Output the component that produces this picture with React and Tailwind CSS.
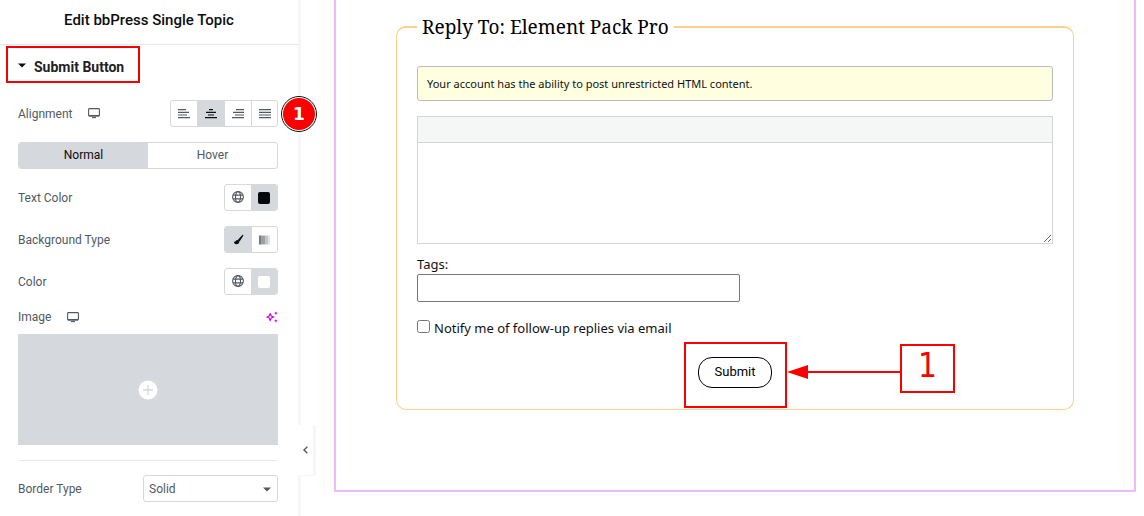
import React from 'react';

const group = 'inline-flex h-[27px] overflow-hidden rounded-[3px] border border-[#d5d8dc] bg-white';

function AlignIcon({ kind }) {
  const rows = {
    left: [[0, 8], [0, 11], [0, 9], [0, 12]],
    center: [[4, 8], [1, 11], [3, 9], [0, 12]],
    right: [[4, 12], [1, 12], [3, 12], [0, 12]],
    justify: [[0, 12], [0, 12], [0, 12], [0, 12]],
  }[kind];
  return (
    <svg width="12" height="10" viewBox="0 0 12 10" fill="none" stroke="currentColor" strokeWidth="1.2" aria-hidden="true">
      {rows.map(([a, b], i) => (
        <path key={i} d={`M${a} ${0.6 + i * 2.7}H${b}`} />
      ))}
    </svg>
  );
}

function Monitor() {
  return (
    <svg width="12" height="11" viewBox="0 0 12 11" fill="none" stroke="#515962" aria-hidden="true">
      <rect x="0.6" y="0.6" width="10.8" height="7.4" rx="0.8" strokeWidth="1.1" />
      <path d="M1 7.7H11" strokeWidth="1.5" />
      <path d="M4 9.6H8" strokeWidth="1.1" />
    </svg>
  );
}

function Globe() {
  return (
    <svg width="12" height="12" viewBox="0 0 12 12" fill="none" stroke="#515962" strokeWidth="1.1" aria-hidden="true">
      <circle cx="6" cy="6" r="5.4" />
      <ellipse cx="6" cy="6" rx="2.5" ry="5.4" />
      <path d="M1 4.1H11M1 7.9H11" />
    </svg>
  );
}

function Brush() {
  return (
    <svg width="11" height="11" viewBox="0 0 12 12" fill="#0c0d0e" aria-hidden="true">
      <path d="M10.2 1C10.9 .7 11.5 1.3 11.2 2L7.6 7.7C7.2 8.3 6.6 8.1 6 7.6C5.4 7.1 5.2 6.6 5.6 6.1Z" />
      <path d="M4.7 6.5C5.9 6.6 6.9 7.6 6.8 8.8C6.6 10.6 5.1 11.2 3.6 11.1C2 11 1.2 9.9 .8 8.2C1.5 8.6 2.1 8.8 2.5 8.2C3 7.3 3.6 6.5 4.7 6.5Z" />
    </svg>
  );
}

function Gradient() {
  return (
    <svg width="12" height="10" viewBox="0 0 12 10" aria-hidden="true">
      <path d="M0 .5H2V9.5H0Z" fill="#777c82" />
      <path d="M2 .5H6V9.5H2Z" fill="#9da2a7" />
      <path d="M6 .5H9V9.5H6Z" fill="#c3c6c9" />
      <path d="M9 .5H11V9.5H9Z" fill="#e0e1e3" />
    </svg>
  );
}

function Sparkles() {
  return (
    <svg width="12" height="12" viewBox="0 0 12 12" fill="none" stroke="#d004d4" aria-hidden="true">
      <path d="M4.2 2.6L5.2 5L7.8 6L5.2 7L4.2 9.6L3.2 7L.8 6L3.2 5Z" strokeWidth="1.2" strokeLinejoin="round" />
      <path d="M9.9 .5L10.5 1.6L11.7 2.2L10.5 2.8L9.9 3.9L9.3 2.8L8.1 2.2L9.3 1.6ZM9.9 8.1L10.5 9.2L11.7 9.8L10.5 10.4L9.9 11.5L9.3 10.4L8.1 9.8L9.3 9.2Z" fill="#d004d4" stroke="none" />
    </svg>
  );
}

function Row({ label, className = 'mt-[15px]', children }) {
  return (
    <div className={`flex h-[27px] items-center justify-between ${className}`}>
      <span>{label}</span>
      {children}
    </div>
  );
}

function ColorControl({ name, swatch }) {
  return (
    <div className={group}>
      <button type="button" aria-label={`${name} global`} className="flex w-[26px] items-center justify-center pb-px"><Globe /></button>
      <button type="button" aria-label={`${name} picker`} className="flex w-[26px] items-center justify-center bg-[#d5d8dc]">
        <span className={`size-3 rounded-[2px] ${swatch}`} />
      </button>
    </div>
  );
}

function Sidebar() {
  return (
    <aside className="relative w-[301px] shrink-0 border-r-[3px] border-[#f6f6f7] font-['Roboto',sans-serif] text-[12px] leading-4 text-[#515962]">
      <header className="flex h-[45px] items-center justify-center border-b border-[#e6e8ea] pb-1">
        <h1 className="text-[15px] leading-5 font-medium text-[#0c0d0e]">Edit bbPress Single Topic</h1>
      </header>

      <div className="ml-1.5 mt-px flex h-[37px] w-[134px] border-2 border-[#f50000]">
        <button type="button" className="flex flex-1 items-center pt-1 pl-2.5 text-[14px] font-bold whitespace-nowrap text-[#1f2124]">
          <svg width="8" height="5" viewBox="0 0 8 5" className="mr-2 mb-0.5" aria-hidden="true"><path d="M0 .5H8L4 4.5Z" fill="#0c0d0e" /></svg>
          Submit Button
        </button>
      </div>

      <div className="pr-5 pl-[18px]">
        <Row className="mt-[17px]" label={<span className="flex items-center gap-4">Alignment <Monitor /></span>}>
          <div className="relative">
            <div className={`${group} align-top`}>
              <button type="button" aria-label="Left" className="flex w-[26px] items-center justify-center"><AlignIcon kind="left" /></button>
              <button type="button" aria-label="Center" className="flex w-[28px] items-center justify-center bg-[#d5d8dc] text-[#0c0d0e]"><AlignIcon kind="center" /></button>
              <button type="button" aria-label="Right" className="flex w-[26px] items-center justify-center"><AlignIcon kind="right" /></button>
              <button type="button" aria-label="Justified" className="flex w-[26px] items-center justify-center border-l border-[#d5d8dc]"><AlignIcon kind="justify" /></button>
            </div>
            <span className="absolute top-1/2 left-full ml-[3px] flex size-9 -translate-y-1/2 items-center justify-center rounded-full border border-[#111] bg-white p-px">
              <span className="flex size-full items-center justify-center rounded-full bg-[#fb0000] font-['DejaVu_Sans',sans-serif] text-[17px] font-bold text-white">1</span>
            </span>
          </div>
        </Row>

        <div className={`${group} mt-[15px] w-full align-top`}>
          <button type="button" className="flex-1 bg-[#d5d8dc] pb-0.5 text-[#0c0d0e]">Normal</button>
          <button type="button" className="flex-1 pb-0.5">Hover</button>
        </div>

        <Row label="Text Color"><ColorControl name="Text Color" swatch="bg-[#05070b]" /></Row>
        <Row label="Background Type">
          <div className={group}>
            <button type="button" aria-label="Classic" className="flex w-[27px] items-center justify-center bg-[#d5d8dc]"><Brush /></button>
            <button type="button" aria-label="Gradient" className="flex w-[25px] items-center justify-center"><Gradient /></button>
          </div>
        </Row>
        <Row label="Color"><ColorControl name="Color" swatch="bg-white" /></Row>

        <div className="mt-[14px] flex items-center justify-between">
          <span className="flex items-center gap-4">Image <Monitor /></span>
          <button type="button" aria-label="Generate with AI"><Sparkles /></button>
        </div>
        <button type="button" aria-label="Choose image" className="mt-[9px] flex h-[111px] w-full items-center justify-center bg-[#d5d8dc]">
          <svg width="20" height="20" viewBox="0 0 20 20" aria-hidden="true">
            <circle cx="10" cy="10" r="9.5" fill="#fff" />
            <path d="M10 5V15M5 10H15" stroke="#d5d8dc" strokeWidth="1.3" />
          </svg>
        </button>

        <hr className="mt-[15px] border-[#e6e8ea]" />

        <div className="mt-[14px] flex h-[27px] items-center justify-between">
          <label htmlFor="border-type">Border Type</label>
          <span className="relative flex w-[135px]">
            <select id="border-type" className="h-[27px] w-full appearance-none rounded-[3px] border border-[#d5d8dc] bg-white pl-[5px]">
              <option>Solid</option>
            </select>
            <svg width="8" height="5" viewBox="0 0 8 5" className="pointer-events-none absolute top-[12px] right-[7px]" aria-hidden="true"><path d="M0 .5H8L4 4.5Z" fill="#515962" /></svg>
          </span>
        </div>
      </div>

      <button type="button" aria-label="Hide panel" className="absolute top-[425px] left-[298px] flex h-[51px] w-[18px] items-center justify-center rounded-r-[3px] border-r-[3px] border-b border-[#f6f6f7] bg-white">
        <svg width="5" height="8" viewBox="0 0 5 8" fill="none" stroke="#515962" strokeWidth="1.4" aria-hidden="true"><path d="M4.3 .7L1 4L4.3 7.3" /></svg>
      </button>
    </aside>
  );
}

function Preview() {
  return (
    <main className="mr-2 mb-6 ml-[33px] min-w-0 flex-1 border-2 border-t-0 border-[#f0b9fb] px-[60px] pt-[14px] pb-20 font-['Noto_Sans',sans-serif] text-[13px] leading-[18px] text-[#101114]">
      <fieldset className="min-w-0 rounded-[10px] border border-t-2 border-[#fbd08c] px-5 pb-[21px]">
        <legend className="px-[5px] font-['Noto_Serif','Liberation_Serif',serif] text-[19px] leading-[26px] text-black">Reply To: Element Pack Pro</legend>

        <div className="mt-[26px] flex h-[35px] items-center rounded-[3px] border border-[#b9bcbf] bg-[#ffffe0] px-[9px] text-[11px]">
          Your account has the ability to post unrestricted HTML content.
        </div>

        <div className="mt-[15px] border border-[#d3d5d9]">
          <div className="h-[26px] border-b border-[#d3d5d9] bg-[#f5f7f6]" />
          <textarea aria-label="Reply" className="block h-[100px] w-full resize-y outline-none" />
        </div>

        <div className="mt-[11px]">
          <label htmlFor="tags" className="block pb-px">Tags:</label>
          <input id="tags" type="text" className="block h-7 w-[323px] max-w-full rounded-[2px] border border-[#767676] px-2" />
        </div>

        <div className="mt-[17px] flex items-center gap-1">
          <input id="notify" type="checkbox" className="mb-[3px] size-[13px]" />
          <label htmlFor="notify">Notify me of follow-up replies via email</label>
        </div>

        <div className="mt-5 flex justify-center">
          <div className="relative">
            <button type="submit" className="h-[31px] w-[74px] rounded-[14px] border border-black pb-px font-['Roboto',sans-serif] text-[13px] text-black">Submit</button>
            <div className="pointer-events-none absolute -top-[15px] -left-[14px] flex items-start">
              <div className="h-[66px] w-[103px] shrink-0 border-2 border-[#fb0000]" />
              <svg width="113" height="14" viewBox="0 0 113 14" className="mt-[23px] shrink-0" aria-hidden="true">
                <path d="M0 7L21 0V14Z" fill="#fb0000" />
                <path d="M20 7H113" stroke="#fb0000" strokeWidth="2" />
              </svg>
              <div className="mt-0.5 flex h-[49px] w-[55px] shrink-0 items-center justify-center border-2 border-[#fb0000] pb-1.5 font-['DejaVu_Sans_Condensed','DejaVu_Sans',sans-serif] text-[33px] leading-none text-[#fb0000]">1</div>
            </div>
          </div>
        </div>
      </fieldset>
    </main>
  );
}

export default function App() {
  return (
    <div className="flex min-h-screen bg-white">
      <Sidebar />
      <Preview />
    </div>
  );
}
